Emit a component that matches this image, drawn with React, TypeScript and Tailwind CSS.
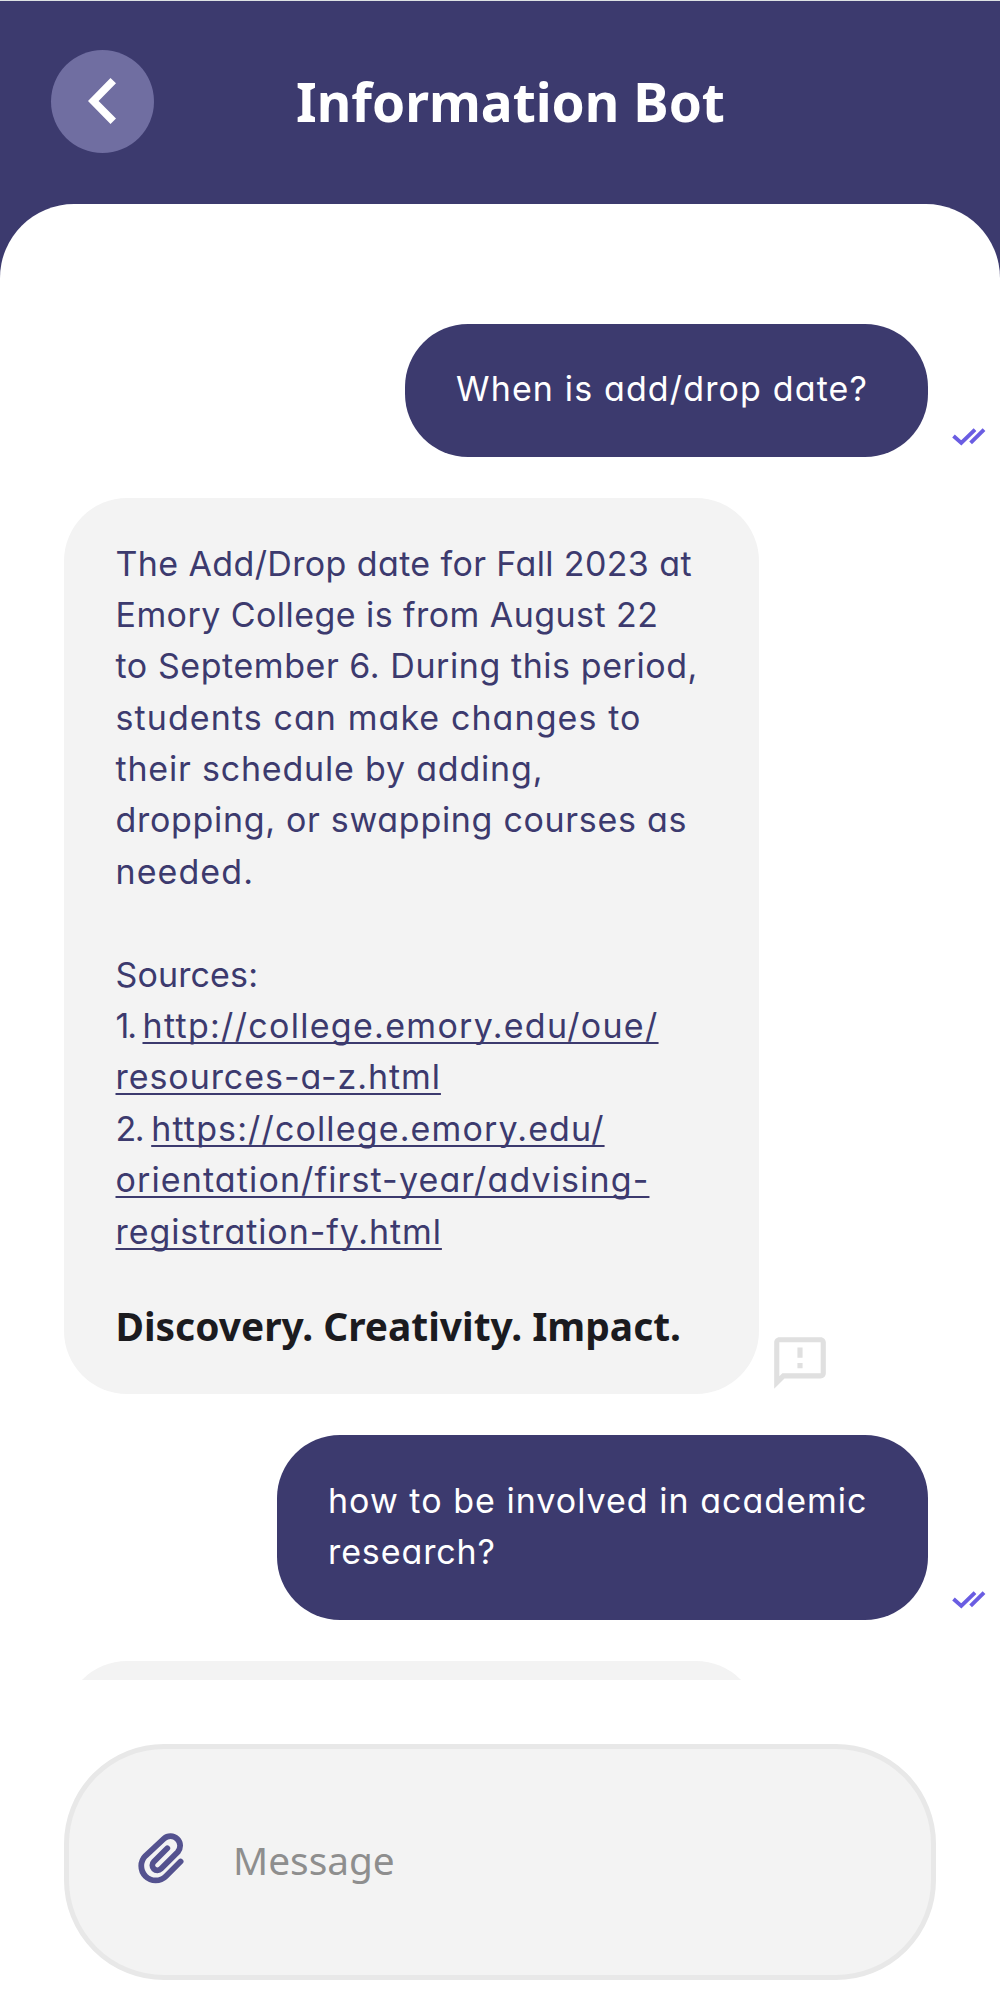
import type { ReactNode } from "react";

function DoubleCheck() {
  return (
    <svg
      className="mb-[11px] ml-[23px] h-[18px] w-9 shrink-0"
      viewBox="0 0 36 18"
      fill="none"
      stroke="#6a5de2"
      strokeWidth="3.9"
    >
      <path d="M2.5 8 10.3 14.9 24 1.6" />
      <path d="M19.6 14.9 33 1.6" />
    </svg>
  );
}

function FeedbackIcon() {
  return (
    <svg className="ml-[10px] h-[62px] w-[62px] shrink-0" viewBox="0 0 24 24" fill="#e0e0e0">
      <path d="M20 2H4c-1.1 0-1.99.9-1.99 2L2 22l4-4h14c1.1 0 2-.9 2-2V4c0-1.1-.9-2-2-2zm0 14H5.17l-.59.59-.58.58V4h16v12zm-9-4h2v2h-2v-2zm0-6h2v4h-2V6z" />
    </svg>
  );
}

function PaperclipIcon() {
  return (
    <svg
      className="mb-[7px] h-[51px] w-[46px] shrink-0"
      viewBox="17 23 46 51"
      fill="none"
      stroke="#54528f"
      strokeWidth="5.8"
      strokeLinecap="round"
      strokeLinejoin="round"
    >
      <path d="M59.6 51.5 44.9 66.2A14.4 14.4 0 0 1 24.5 45.8L43 28.7A9.6 9.6 0 0 1 56.8 42L40 58.8A5 5 0 0 1 32.8 51.7L46.3 38.3" />
    </svg>
  );
}

function Line({ className = "", children }: { className?: string; children?: ReactNode }) {
  return <div className={`h-[51.4px] whitespace-pre ${className}`}>{children}</div>;
}

const link =
  "underline decoration-2 underline-offset-[4px] [text-decoration-skip-ink:none]";

function UserMessage({ className, children }: { className: string; children: ReactNode }) {
  return (
    <div className="flex items-end justify-end pr-[13px]">
      <div className={`rounded-[63px] bg-[#3c3a6e] pl-[51px] pt-[39.5px] text-white ${className}`}>
        {children}
      </div>
      <DoubleCheck />
    </div>
  );
}

export default function App() {
  return (
    <div className="flex h-[2009px] w-[1000px] flex-col overflow-hidden border-t border-[#dde2e4] bg-[#3c3a6e] font-['Noto_Sans',sans-serif]">
      <header className="relative flex h-[203px] shrink-0 items-start justify-center">
        <button
          aria-label="Back"
          className="absolute left-[51px] top-[48.5px] flex h-[103px] w-[103px] items-center justify-center rounded-full bg-[#706ea1]"
        >
          <svg className="mr-[1px] h-[46px] w-[28px]" viewBox="0 0 28 46" fill="white">
            <path d="M22.5 0 28 5.2 10.6 23 28 40.6 22.5 46 0 23Z" />
          </svg>
        </button>
        <h1 className="mt-[65px] pl-[21px] text-[53.2px] font-bold leading-[72px] text-white">
          Information Bot
        </h1>
      </header>

      <main className="flex min-h-0 flex-1 flex-col rounded-t-[74px] bg-white">
        <section className="flex h-[1476px] shrink-0 flex-col gap-[41px] overflow-hidden pt-[119.5px] font-['Inter',sans-serif] text-[34px] leading-[51.4px] [font-feature-settings:'cv11']">
          <UserMessage className="h-[133.5px] w-[523px]">
            <Line className="tracking-[1.14px]">When is add/drop date?</Line>
          </UserMessage>

          <div className="flex items-end pl-16">
            <div className="h-[896px] w-[695px] rounded-[63px] bg-[#f3f3f3] pl-[51.5px] pt-[39.5px] text-[#3c3a6e]">
              <Line className="tracking-[0.38px]">The Add/Drop date for Fall 2023 at</Line>
              <Line className="tracking-[0.44px]">Emory College is from August 22</Line>
              <Line className="tracking-[0.56px]">to September 6. During this period,</Line>
              <Line className="tracking-[1.08px]">students can make changes to</Line>
              <Line className="tracking-[0.8px]">their schedule by adding,</Line>
              <Line className="tracking-[0.69px]">dropping, or swapping courses as</Line>
              <Line className="tracking-[1.08px]">needed.</Line>
              <Line />
              <Line className="tracking-[0.13px]">Sources:</Line>
              <Line>
                <span className="tracking-[-2.07px]">1. </span>
                <a className={`${link} tracking-[1.3px]`}>http://college.emory.edu/oue/</a>
              </Line>
              <Line>
                <a className={`${link} tracking-[0.94px]`}>resources-a-z.html</a>
              </Line>
              <Line>
                <span className="tracking-[-1.47px]">2. </span>
                <a className={`${link} tracking-[1.14px]`}>https://college.emory.edu/</a>
              </Line>
              <Line>
                <a className={`${link} tracking-[1.12px]`}>orientation/first-year/advising-</a>
              </Line>
              <Line>
                <a className={`${link} tracking-[0.92px]`}>registration-fy.html</a>
              </Line>
              <p className="mt-[43px] whitespace-nowrap font-['Noto_Sans',sans-serif] text-[38.9px] font-bold leading-[52px] text-[#1b1b1f]">
                Discovery. Creativity. Impact.
              </p>
            </div>
            <FeedbackIcon />
          </div>

          <UserMessage className="h-[185px] w-[651px]">
            <Line className="tracking-[1.02px]">how to be involved in academic</Line>
            <Line className="tracking-[0.9px]">research?</Line>
          </UserMessage>

          <div className="pl-16">
            <div className="h-[200px] w-[695px] rounded-[63px] bg-[#f3f3f3]" />
          </div>
        </section>

        <footer className="mx-16 mt-[64px] flex h-[236px] shrink-0 items-center rounded-[100px] border-[5px] border-[#e8e8e8] bg-[#f3f3f3] pl-[69px]">
          <PaperclipIcon />
          <span className="mb-1 ml-[49px] text-[38.8px] leading-[52px] text-[#8e8e8e]">Message</span>
        </footer>
      </main>
    </div>
  );
}
